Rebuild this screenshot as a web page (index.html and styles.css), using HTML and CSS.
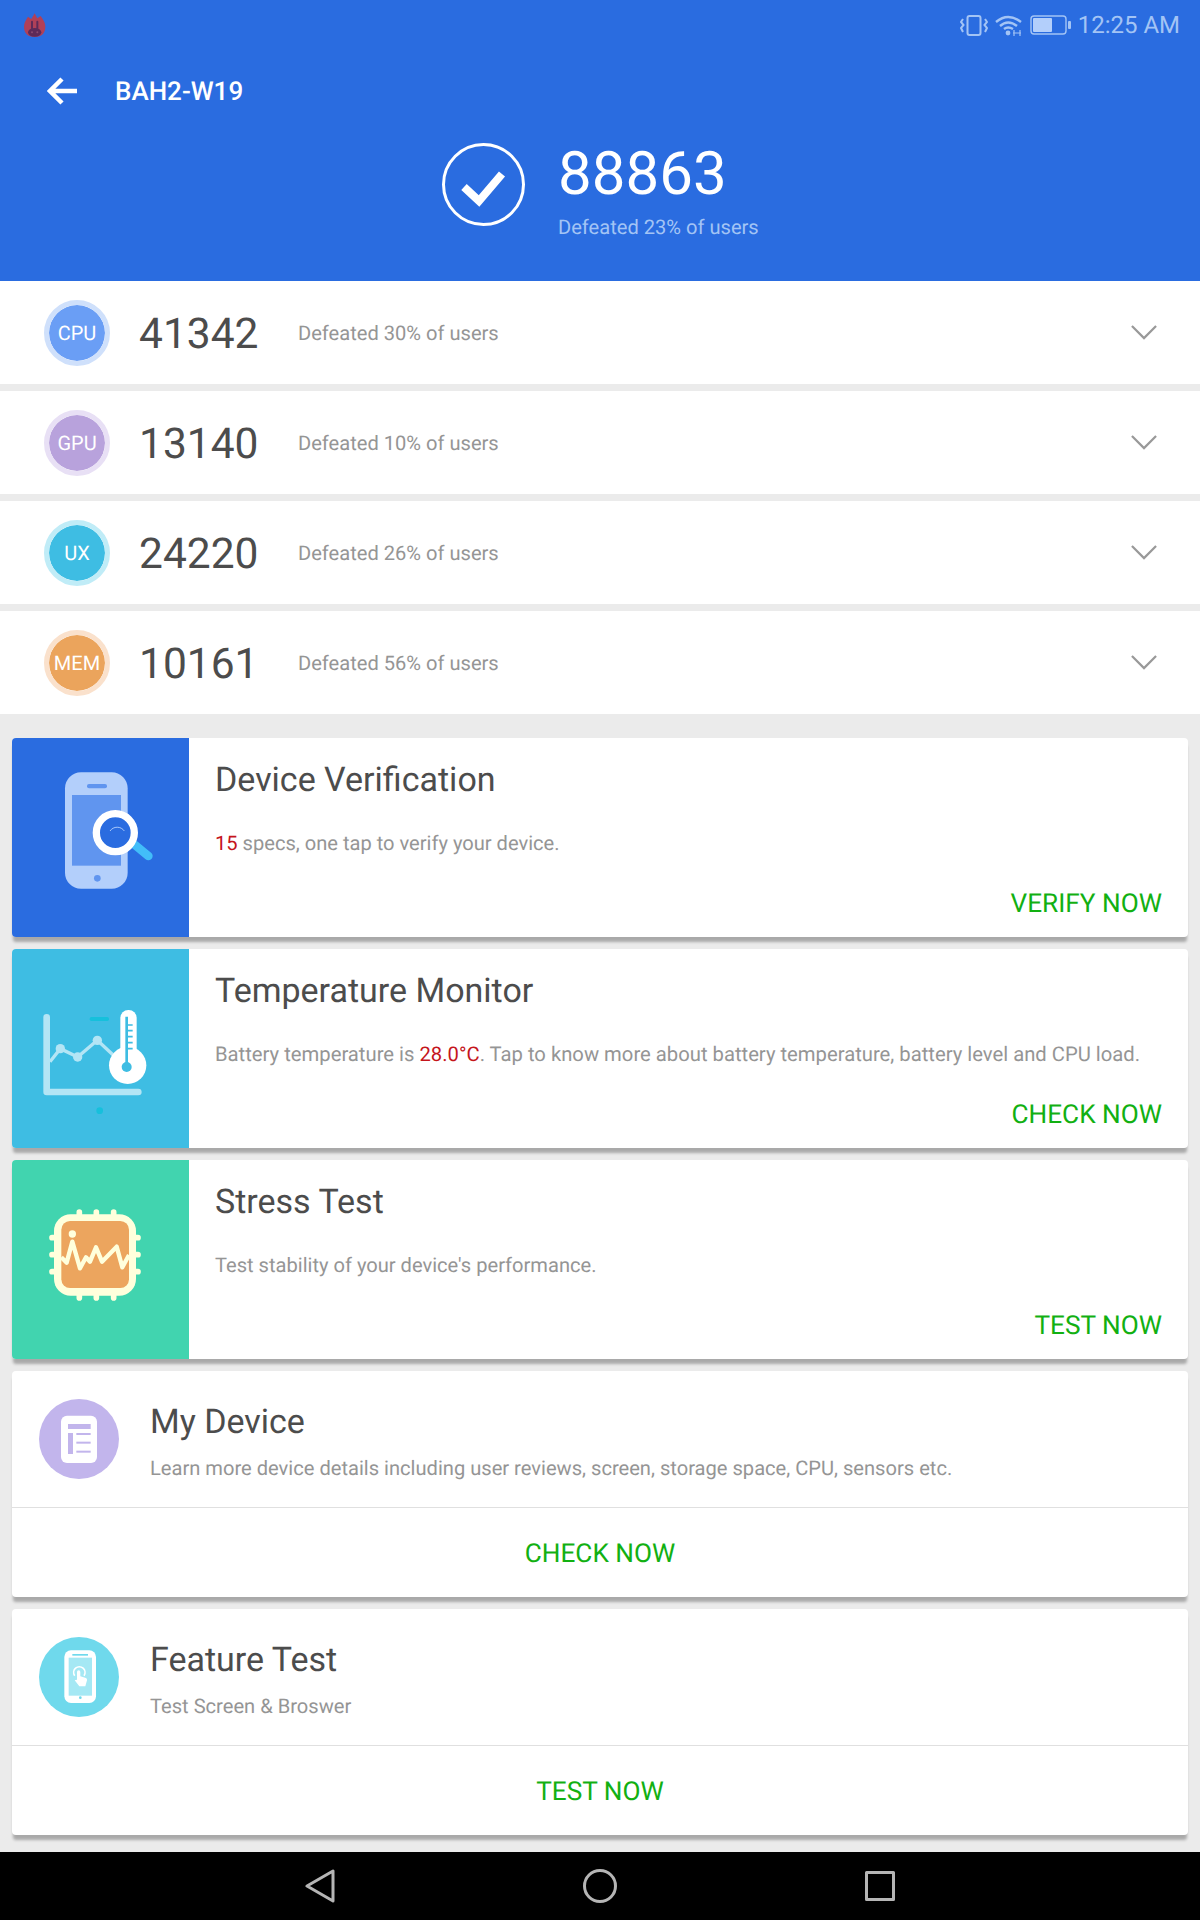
FILE: index.html
```html
<!DOCTYPE html>
<html lang="en">
<head>
  <meta charset="UTF-8" />
  <title>BAH2-W19</title>
  <link rel="stylesheet" href="styles.css">
</head>
<body>

  <header class="top">
    <div class="status">
      <svg class="app-icon" width="22" height="24" viewBox="26 12 66 72">
        <path d="M58 13 L66 28 L76 21 Q90 40 90 52 Q90 84 58 84 Q26 84 26 52 Q26 40 38 23 L48 30 Z" fill="#b04058"/>
        <ellipse cx="58" cy="70" rx="20" ry="13" fill="#5e2a58"/>
        <path d="M50 38 V62 M66 38 V62" stroke="#5e2a58" stroke-width="6" stroke-linecap="round" fill="none"/>
        <circle cx="50" cy="70" r="3" fill="#8a4a70"/>
        <circle cx="66" cy="70" r="3" fill="#8a4a70"/>
      </svg>
      <div class="status-right">
        <svg width="28" height="21" viewBox="0 0 28 21" fill="none" stroke="#a3c4f5" stroke-width="2">
          <rect x="7.500" y="1" width="13" height="19" rx="2"/>
          <path d="M3 4 L1 7 L3.500 10 L1 13 L3 17 M25 4 L27 7 L24.500 10 L27 13 L25 17"/>
        </svg>
        <svg width="28" height="21" viewBox="0 0 28 21" fill="none" stroke="#a3c4f5" stroke-width="2.400">
          <path d="M1 7 Q13 -3 26 7 M5 11 Q13 4 22 11 M9 14 Q13 11 18 14"/>
          <circle cx="13" cy="18" r="2.400" fill="#a3c4f5" stroke="none"/>
          <path d="M19 15 V21 M25 15 V21 M18 18 H26" stroke-width="1.200"/>
        </svg>
        <svg width="41" height="20" viewBox="0 0 41 20">
          <rect x="1" y="1" width="35" height="18" rx="3" fill="none" stroke="#a3c4f5" stroke-width="1.400"/>
          <rect x="3" y="3" width="19" height="14" rx="1" fill="#b3cffb"/>
          <rect x="38" y="6" width="3" height="8" rx="1" fill="#a3c4f5"/>
        </svg>
        <span class="clock">12:25 AM</span>
      </div>
    </div>

    <div class="toolbar">
      <svg width="30" height="28" viewBox="0 0 30 28" fill="none" stroke="#fff" stroke-width="4.500">
        <path d="M30 14 H4 M15 2 L3 14 L15 26"/>
      </svg>
      <span class="device-name">BAH2-W19</span>
    </div>

    <div class="total">
      <svg width="83" height="83" viewBox="0 0 83 83" fill="none" stroke="#fff">
        <circle cx="41.500" cy="41.500" r="40" stroke-width="3"/>
        <path d="M22 44 L37 58 L60 31" stroke-width="8"/>
      </svg>
      <div class="total-text">
        <div class="total-score">88863</div>
        <div class="total-note">Defeated 23% of users</div>
      </div>
    </div>
  </header>

  <main class="content">
    <section class="rows">
      <div class="row">
        <div class="badge badge-cpu">CPU</div>
        <div class="row-score">41342</div>
        <div class="row-note">Defeated 30% of users</div>
        <svg class="chevron" width="26" height="15" viewBox="0 0 28 16" fill="none" stroke="#999" stroke-width="2.400"><path d="M1 1 L14 14 L27 1"/></svg>
      </div>
      <div class="row">
        <div class="badge badge-gpu">GPU</div>
        <div class="row-score">13140</div>
        <div class="row-note">Defeated 10% of users</div>
        <svg class="chevron" width="26" height="15" viewBox="0 0 28 16" fill="none" stroke="#999" stroke-width="2.400"><path d="M1 1 L14 14 L27 1"/></svg>
      </div>
      <div class="row">
        <div class="badge badge-ux">UX</div>
        <div class="row-score">24220</div>
        <div class="row-note">Defeated 26% of users</div>
        <svg class="chevron" width="26" height="15" viewBox="0 0 28 16" fill="none" stroke="#999" stroke-width="2.400"><path d="M1 1 L14 14 L27 1"/></svg>
      </div>
      <div class="row">
        <div class="badge badge-mem">MEM</div>
        <div class="row-score">10161</div>
        <div class="row-note">Defeated 56% of users</div>
        <svg class="chevron" width="26" height="15" viewBox="0 0 28 16" fill="none" stroke="#999" stroke-width="2.400"><path d="M1 1 L14 14 L27 1"/></svg>
      </div>
    </section>

    <section class="cards">
      <!-- cards with a picture on the left -->
      <article class="card">
        <svg class="card-pic" width="177" height="199" viewBox="36 24 531 597">
          <rect x="36" y="24" width="531" height="597" fill="#2a6ce0"/>
          <rect x="195" y="127" width="188" height="349" rx="48" fill="#b3cffb"/>
          <rect x="216" y="195" width="147" height="212" fill="#6095ef"/>
          <rect x="261" y="162" width="60" height="13" rx="6" fill="#6095ef"/>
          <circle cx="292" cy="445" r="10" fill="#6095ef"/>
          <path d="M405 345 L445 378" stroke="#42bdf9" stroke-width="26" stroke-linecap="round"/>
          <circle cx="346" cy="308" r="57" fill="#2a6ce0" stroke="#fff" stroke-width="22"/>
          <path d="M330 303 A26 26 0 0 1 373 303" fill="none" stroke="#a8c8fa" stroke-width="3"/>
        </svg>
        <div class="card-body">
          <h2 class="card-title">Device Verification</h2>
          <p class="card-desc"><span class="hot">15</span> specs, one tap to verify your device.</p>
          <div class="card-action">VERIFY NOW</div>
        </div>
      </article>

      <article class="card">
        <svg class="card-pic" width="177" height="199" viewBox="36 27 531 597">
          <rect x="36" y="27" width="531" height="597" fill="#3ebde3"/>
          <path d="M140 232 V456 H415" fill="none" stroke="#b3e5f5" stroke-width="20" stroke-linecap="round" stroke-linejoin="round"/>
          <path d="M150 365 L181 326 L233 351 L292 301 L345 350" fill="none" stroke="#b3e5f5" stroke-width="10"/>
          <circle cx="181" cy="326" r="14" fill="#b3e5f5"/>
          <circle cx="233" cy="351" r="14" fill="#b3e5f5"/>
          <circle cx="292" cy="301" r="14" fill="#b3e5f5"/>
          <rect x="269" y="231" width="58" height="12" rx="5" fill="#16c0dc"/>
          <circle cx="299" cy="512" r="10" fill="#16c0dc"/>
          <rect x="361" y="210" width="49" height="150" rx="24" fill="#fff"/>
          <circle cx="383" cy="376" r="56" fill="#fff"/>
          <path d="M380 230 V380" stroke="#3ebde3" stroke-width="8"/>
          <circle cx="380" cy="381" r="15" fill="#3ebde3"/>
          <path d="M384 255 H398 M384 272 H398 M384 290 H398 M384 308 H398 M384 326 H398" stroke="#3ebde3" stroke-width="5"/>
        </svg>
        <div class="card-body">
          <h2 class="card-title">Temperature Monitor</h2>
          <p class="card-desc card-desc-long">Battery temperature is <span class="hot">28.0°C</span>. Tap to know more about battery temperature, battery level and CPU load.</p>
          <div class="card-action">CHECK NOW</div>
        </div>
      </article>

      <article class="card">
        <svg class="card-pic" width="177" height="199" viewBox="36 30 531 597">
          <rect x="36" y="30" width="531" height="597" fill="#41d4af"/>
          <path d="M238 186 V444 M289 186 V444 M341 186 V444 M156 263 H414 M156 314 H414 M156 365 H414" stroke="#ffffdc" stroke-width="17" stroke-linecap="round"/>
          <rect x="162" y="193" width="246" height="244" rx="50" fill="#ffffdc"/>
          <rect x="184" y="213" width="203" height="201" rx="26" fill="#eca55e"/>
          <circle cx="217" cy="252" r="11" fill="#ffffdc"/>
          <path d="M184 322 L200 338 L217 275 L240 355 L258 322 L270 335 L288 292 L306 335 L350 290 L367 352 L387 315" fill="none" stroke="#ffffdc" stroke-width="13" stroke-linejoin="round"/>
        </svg>
        <div class="card-body">
          <h2 class="card-title">Stress Test</h2>
          <p class="card-desc">Test stability of your device's performance.</p>
          <div class="card-action">TEST NOW</div>
        </div>
      </article>

      <!-- wide cards -->
      <article class="card card-wide">
        <div class="wide-top">
          <svg width="80" height="80" viewBox="117 115 240 240">
            <circle cx="237" cy="235" r="120" fill="#c2b5ec"/>
            <rect x="183" y="165" width="108" height="142" rx="18" fill="#fff"/>
            <rect x="204" y="190" width="68" height="15" fill="#c2b5ec"/>
            <rect x="204" y="217" width="15" height="63" fill="#c2b5ec"/>
            <rect x="229" y="217" width="43" height="6" fill="#c2b5ec"/>
            <rect x="229" y="243" width="43" height="6" fill="#c2b5ec"/>
            <rect x="229" y="270" width="43" height="6" fill="#c2b5ec"/>
          </svg>
          <div class="wide-text">
            <h2 class="card-title">My Device</h2>
            <p class="wide-desc">Learn more device details including user reviews, screen, storage space, CPU, sensors etc.</p>
          </div>
        </div>
        <div class="wide-action">CHECK NOW</div>
      </article>

      <article class="card card-wide">
        <div class="wide-top">
          <svg width="80" height="80" viewBox="117 110 240 240">
            <circle cx="237" cy="230" r="120" fill="#6fd9ec"/>
            <rect x="193" y="150" width="95" height="158" rx="20" fill="#fff"/>
            <rect x="206" y="172" width="70" height="114" fill="#a5e8f4"/>
            <rect x="217" y="161" width="47" height="5" fill="#6fd9ec"/>
            <circle cx="241" cy="292" r="4" fill="#6fd9ec"/>
            <path d="M224 226 A17 17 0 1 1 252 226" fill="none" stroke="#fff" stroke-width="5"/>
            <path d="M231 215 a5 5 0 0 1 10 0 V228 L258 233 Q262 235 261 240 L256 258 H238 L224 240 L231 238 Z" fill="#fff"/>
          </svg>
          <div class="wide-text">
            <h2 class="card-title">Feature Test</h2>
            <p class="wide-desc">Test Screen &amp; Broswer</p>
          </div>
        </div>
        <div class="wide-action">TEST NOW</div>
      </article>
    </section>
  </main>

  <nav class="navbar">
    <svg width="30" height="34" viewBox="0 0 30 34" fill="none" stroke="#b5b5b5" stroke-width="3" stroke-linejoin="round"><path d="M28 2 V32 L2 17 Z"/></svg>
    <svg width="34" height="34" viewBox="0 0 34 34" fill="none" stroke="#b5b5b5" stroke-width="3"><circle cx="17" cy="17" r="15.500"/></svg>
    <svg width="30" height="30" viewBox="0 0 30 30" fill="none" stroke="#b5b5b5" stroke-width="3" stroke-linejoin="round"><rect x="1.500" y="1.500" width="27" height="27"/></svg>
  </nav>

</body>
</html>
```

FILE: styles.css
```css
* { box-sizing: border-box; }
body {
  margin: 0; padding: 0;
  width: 1200px; height: 1920px;
  background: #ebebeb;
  color: #4c4c4c; font-family: 'Roboto', sans-serif;
  text-rendering: geometricPrecision;
  display: flex; flex-direction: column;
  overflow: hidden;
}

/* header */
.top {
  height: 281px; background: #2a6ce0; color: #fff;
  display: flex; flex-direction: column;
  flex-shrink: 0;
}
.status {
  height: 50px; padding: 13px 20px 0 24px;
  display: flex; justify-content: space-between; align-items: flex-start;
}
.status-right {
  display: flex; align-items: center; gap: 7px;
}
.clock {
  font-size: 24px; line-height: 24px; color: #a3c4f5;
}
.toolbar {
  height: 82px; padding-left: 47px;
  display: flex; align-items: center; gap: 38px;
}
.device-name {
  font-size: 26px; font-weight: 500;
  padding-top: 2px;
}
.total {
  margin-top: 11px;
  padding-left: 442px;
  display: flex; gap: 33px;
}
.total-score {
  font-size: 60px; line-height: 60px; font-weight: 400;
  margin-top: 1px;
}
.total-note {
  font-size: 20.100px; line-height: 28px; color: #a3c4f5;
  margin-top: 9px;
}

/* score rows */
.content {
  flex: 1;
  display: flex; flex-direction: column;
}
.rows {
  display: flex; flex-direction: column; gap: 7px;
}
.row {
  height: 103px; background: #fff;
  padding: 0 43px 0 44px;
  display: flex; align-items: center;
}
.badge {
  width: 66px; height: 66px; border-radius: 50%;
  border: 5px solid;
  color: #fff; font-size: 20px;
  display: flex; align-items: center; justify-content: center;
  background-clip: padding-box;
}
.badge-cpu { background-color: #6a9ef5; border-color: #cfe0fb; }
.badge-gpu { background-color: #b8a2dc; border-color: #e8e0f5; }
.badge-ux { background-color: #3ebde3; border-color: #c0ecf7; }
.badge-mem { background-color: #eba45c; border-color: #fae1cc; }
.row-score {
  margin-left: 29px; width: 159px; padding-top: 3px;
  font-size: 42.500px; color: #4c4c4c;
}
.row-note {
  font-size: 20.100px; color: #959595;
}
.chevron { margin-left: auto; }

/* cards */
.cards {
  margin-top: 24px; padding: 0 12px;
  display: flex; flex-direction: column; gap: 12px;
}
.card {
  height: 199px; background: #fff;
  border-radius: 4px; overflow: hidden;
  box-shadow: 0 6px 3px -1px rgba(0,0,0,0.28);
  display: flex;
}
.card-pic { flex-shrink: 0; display: block; }
.card-body {
  flex: 1;
  padding: 22px 26px 19px 26px;
  display: flex; flex-direction: column;
}
.card-title {
  margin: 0;
  font-size: 34px; line-height: 40px; font-weight: 400; color: #4c4c4c;
}
.card-desc {
  margin: 29px 0 0;
  font-size: 20.100px; line-height: 28px; color: #959595;
}
.card-desc-long { font-size: 20.240px; }
.hot { color: #c5151c; }
.card-action {
  margin-top: auto; text-align: right;
  font-size: 26.200px; line-height: 28px; color: #12b012;
}
.card-wide {
  height: 226px;
  flex-direction: column;
}
.wide-top {
  height: 137px; padding: 28px 27px 0;
  border-bottom: 1px solid #e0e0e0;
  display: flex; gap: 31px;
}
.wide-text { padding-top: 3px; }
.wide-desc {
  margin: 12px 0 0;
  font-size: 20.120px; line-height: 28px; color: #959595;
}
.wide-action {
  flex: 1; padding-top: 3px;
  font-size: 26.200px; color: #12b012;
  display: flex; align-items: center; justify-content: center;
}

/* bottom navigation */
.navbar {
  height: 68px; background: #000; flex-shrink: 0;
  display: flex; align-items: center;
  padding-left: 305px; gap: 248px;
}
```
